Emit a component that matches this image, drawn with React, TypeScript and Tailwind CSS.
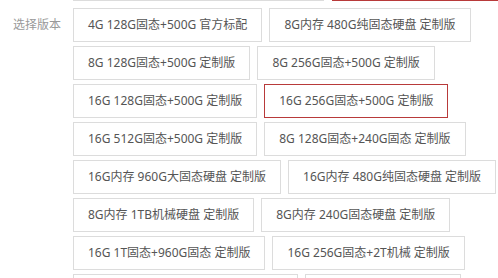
import { useState } from "react";

const versions = [
    "4G 128G固态+500G 官方标配",
    "8G内存 480G纯固态硬盘 定制版",
    "8G 128G固态+500G 定制版",
    "8G 256G固态+500G 定制版",
    "16G 128G固态+500G 定制版",
    "16G 256G固态+500G 定制版",
    "16G 512G固态+500G 定制版",
    "8G 128G固态+240G固态 定制版",
    "16G内存 960G大固态硬盘 定制版",
    "16G内存 480G纯固态硬盘 定制版",
    "8G内存 1TB机械硬盘 定制版",
    "8G内存 240G固态硬盘 定制版",
    "16G 1T固态+960G固态 定制版",
    "16G 256G固态+2T机械 定制版",
    "32G内存 1T固态+2T机械硬盘 定制版",
    "32G内存 2T固态 定制版",
];

export default function App() {
    const [selected, setSelected] = useState(5);

    return <div className="w-[498px] h-[278px] overflow-hidden bg-white flex text-[12px]" style={{ fontFamily: '"Noto Sans", "Noto Sans CJK SC", sans-serif' }}>
        <div className="w-[73px] shrink-0 pl-[13px]">
            <div className="mt-[8px] h-[34px] flex items-center text-[#999]">选择版本</div>
        </div>
        <div className="flex-1 min-w-0 overflow-hidden">
            <div className="-mt-[33px] mb-[7px] flex gap-x-[8px] h-[34px]">
                <div className="w-[251px] shrink-0 border border-[#dcdcdc]" />
                <div className="w-[240px] shrink-0 border border-[#b83a3a]" />
            </div>
            <div className="flex flex-wrap gap-x-[7px] gap-y-[4px] w-[425px]">
                {versions.map((v, i) =>
                    <button
                        key={v}
                        onClick={() => setSelected(i)}
                        className={`h-[34px] px-[14px] whitespace-nowrap text-[#555] bg-white border ${i === selected ? "border-[#b83a3a]" : "border-[#dcdcdc]"}`}
                    >
                        {v}
                    </button>
                )}
            </div>
        </div>
    </div>
}
